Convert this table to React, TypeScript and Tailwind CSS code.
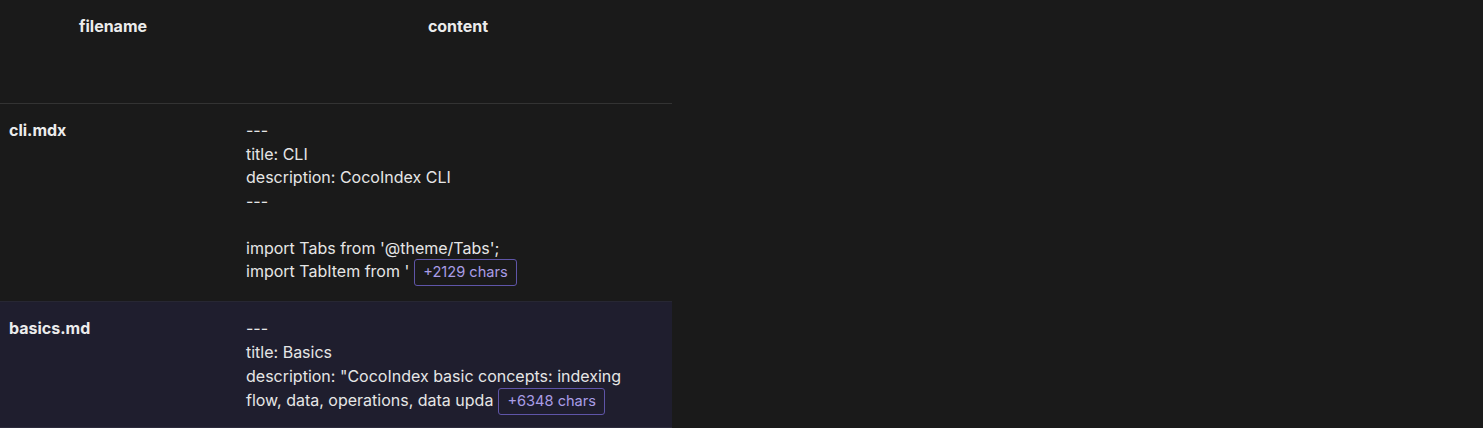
import React from "react";

const font = { fontFamily: "Inter, 'Noto Sans', sans-serif" };

function Badge({ n }: { n: string }) {
  return (
    <span className="ml-[5px] inline-block rounded-[3px] border border-[#5f55a8] px-[8px] text-[14.6px] leading-[25px] text-[#a99de6] align-middle">
      {n}
    </span>
  );
}

export default function App() {
  return (
    <div className="h-[428px] w-[1483px] bg-[#1a1a1a] overflow-hidden" style={font}>
      <div className="w-[672px]">
        <div className="flex h-[104px] border-b border-[#333333]">
          <div className="w-[226px] pt-[16px] text-center text-[16px] font-bold leading-[20px] text-[#ececec]">filename</div>
          <div className="ml-[18px] flex-1 pt-[16px] text-center text-[16px] font-bold leading-[20px] text-[#ececec]">content</div>
        </div>
        <div className="flex h-[198px] border-b border-[#272733]">
          <div className="w-[237px] pl-[9px] pt-[14px] text-[16px] font-bold leading-[24px] text-[#ececec]">cli.mdx</div>
          <div className="flex-1 pl-[9px] pt-[14px] text-[16px] leading-[24px] text-[#e6e6e6]">
            <div>---</div>
            <div className="h-[23px]">title: CLI</div>
            <div>description: CocoIndex CLI</div>
            <div>---</div>
            <div className="h-[23px]"></div>
            <div>import Tabs from '@theme/Tabs';</div>
            <div className="-mt-[1px]">import TabItem from '<Badge n="+2129 chars" /></div>
          </div>
        </div>
        <div className="flex h-[126px] bg-[#1f1e2e] border-b border-[#2c2b3c]">
          <div className="w-[237px] pl-[9px] pt-[14px] text-[16px] font-bold leading-[24px] text-[#ececec]">basics.md</div>
          <div className="flex-1 pl-[9px] pt-[14px] text-[16px] leading-[24px] text-[#e6e6e6]">
            <div>---</div>
            <div>title: Basics</div>
            <div>description: "CocoIndex basic concepts: indexing</div>
            <div>flow, data, operations, data upda<Badge n="+6348 chars" /></div>
          </div>
        </div>
      </div>
    </div>
  );
}
